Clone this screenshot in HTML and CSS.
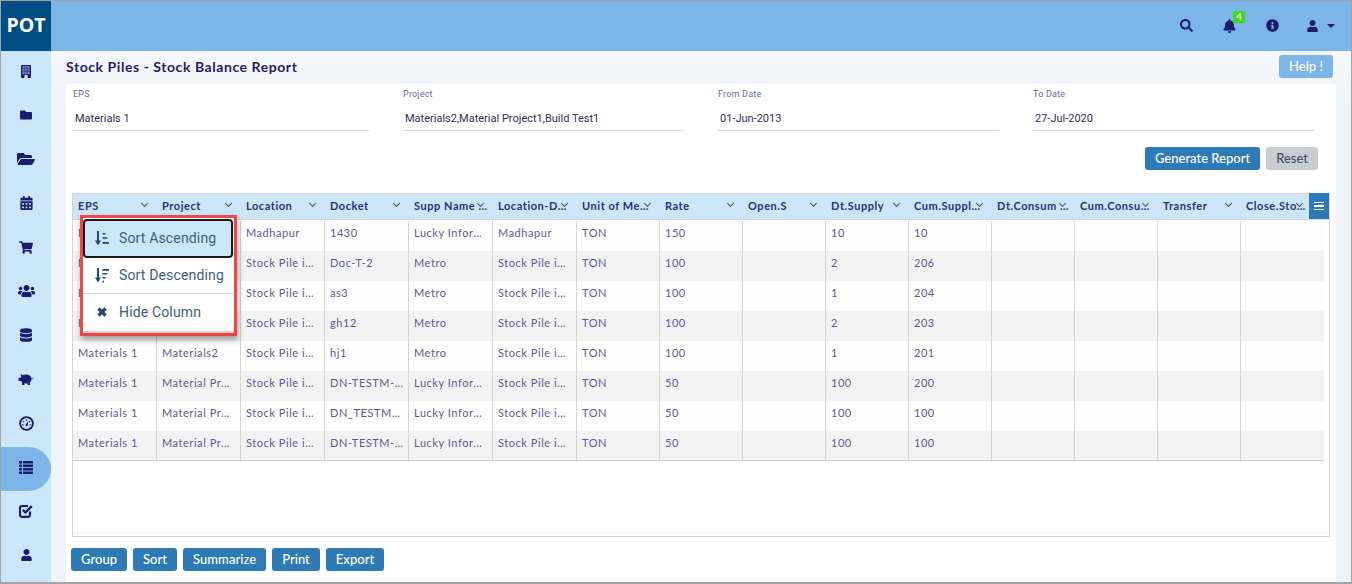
FILE: index.html
```html
<!DOCTYPE html>
<html lang="en">
<head>
<meta charset="utf-8">
<title>Stock Balance Report</title>
<link rel="stylesheet" href="styles.css">
</head>
<body>
<div class="app">
  <header class="topbar">
    <div class="logo">POT</div>
    <div class="top-icons">
      <svg class="ti search" viewBox="0 0 512 512"><path d="M505 442.7L405.3 343c-4.5-4.5-10.6-7-17-7H372c27.6-35.3 44-79.7 44-128C416 93.1 322.9 0 208 0S0 93.1 0 208s93.1 208 208 208c48.3 0 92.7-16.4 128-44v16.3c0 6.4 2.5 12.5 7 17l99.7 99.7c9.4 9.4 24.6 9.4 33.9 0l28.3-28.3c9.4-9.4 9.4-24.6.1-34zM208 336c-70.7 0-128-57.2-128-128 0-70.7 57.2-128 128-128 70.7 0 128 57.2 128 128 0 70.7-57.2 128-128 128z"/></svg>
      <div class="bell-wrap">
        <svg class="ti bell" viewBox="0 0 448 512"><path d="M224 512c35.32 0 63.97-28.65 63.97-64H160.03c0 35.35 28.65 64 63.97 64zm215.39-149.71c-19.32-20.76-55.47-51.99-55.47-154.29 0-77.7-54.48-139.9-127.94-155.16V32c0-17.67-14.32-32-31.98-32s-31.98 14.33-31.98 32v20.84C118.56 68.1 64.08 130.3 64.08 208c0 102.3-36.15 133.53-55.47 154.29-6 6.45-8.66 14.16-8.61 21.71.11 16.4 12.98 32 32.1 32h383.8c19.12 0 32-15.6 32.1-32 .05-7.55-2.61-15.27-8.61-21.71z"/></svg>
        <span class="badge">4</span>
      </div>
      <svg class="ti info" viewBox="0 0 512 512"><path d="M256 8C119.043 8 8 119.083 8 256c0 136.997 111.043 248 248 248s248-111.003 248-248C504 119.083 392.957 8 256 8zm0 110c23.196 0 42 18.804 42 42s-18.804 42-42 42-42-18.804-42-42 18.804-42 42-42zm56 254c0 6.627-5.373 12-12 12h-88c-6.627 0-12-5.373-12-12v-24c0-6.627 5.373-12 12-12h12v-64h-12c-6.627 0-12-5.373-12-12v-24c0-6.627 5.373-12 12-12h64c6.627 0 12 5.373 12 12v100h12c6.627 0 12 5.373 12 12v24z"/></svg>
      <div class="user-menu">
        <svg class="ti user" viewBox="0 0 448 512"><path d="M224 256c70.7 0 128-57.3 128-128S294.7 0 224 0 96 57.3 96 128s57.3 128 128 128zm89.6 32h-16.7c-22.2 10.2-46.9 16-72.9 16s-50.6-5.8-72.9-16h-16.7C60.2 288 0 348.2 0 422.4V464c0 26.5 21.5 48 48 48h352c26.5 0 48-21.5 48-48v-41.6c0-74.2-60.2-134.4-134.4-134.4z"/></svg>
        <span class="caret"></span>
      </div>
    </div>
  </header>
  <div class="body">
    <nav class="sidebar">
      <div class="nav-item"><svg class="ni ni-building" viewBox="0 0 10 13"><rect width="10" height="13" rx=".8" fill="#1b1b6f"/><rect x="1.300" y="1" width="7.400" height="8.200" fill="#6f7fb2"/><path d="M3.800 1v8.200M6.200 1v8.200M1.300 3.700h7.400M1.300 6.400h7.400" stroke="#2b2f7c" stroke-width=".6"/><rect x="3.500" y="10.200" width="3" height="2.800" fill="#fff"/></svg></div>
      <div class="nav-item"><svg class="ni ni-folder" viewBox="0 0 512 512"><path d="M464 128H272l-64-64H48C21.49 64 0 85.49 0 112v288c0 26.51 21.49 48 48 48h416c26.51 0 48-21.49 48-48V176c0-26.51-21.49-48-48-48z"/></svg></div>
      <div class="nav-item"><svg class="ni ni-open" viewBox="0 0 576 512"><path d="M572.694 292.093L500.27 416.248A63.997 63.997 0 0 1 444.989 448H45.025c-18.523 0-30.064-20.093-20.731-36.093l72.424-124.155A64 64 0 0 1 152 256h399.964c18.523 0 30.064 20.093 20.73 36.093zM152 224h328v-48c0-26.51-21.49-48-48-48H272l-64-64H48C21.49 64 0 85.49 0 112v278.046l69.077-118.418C86.214 242.25 117.989 224 152 224z"/></svg></div>
      <div class="nav-item"><svg class="ni ni-cal" viewBox="0 0 448 512"><path d="M0 464c0 26.5 21.5 48 48 48h352c26.5 0 48-21.5 48-48V192H0v272zm320-196c0-6.6 5.4-12 12-12h40c6.6 0 12 5.4 12 12v40c0 6.6-5.4 12-12 12h-40c-6.6 0-12-5.4-12-12v-40zm0 128c0-6.6 5.4-12 12-12h40c6.6 0 12 5.4 12 12v40c0 6.6-5.4 12-12 12h-40c-6.6 0-12-5.4-12-12v-40zM192 268c0-6.6 5.4-12 12-12h40c6.6 0 12 5.4 12 12v40c0 6.6-5.4 12-12 12h-40c-6.6 0-12-5.4-12-12v-40zm0 128c0-6.6 5.4-12 12-12h40c6.6 0 12 5.4 12 12v40c0 6.6-5.4 12-12 12h-40c-6.6 0-12-5.4-12-12v-40zM64 268c0-6.6 5.4-12 12-12h40c6.6 0 12 5.4 12 12v40c0 6.6-5.4 12-12 12H76c-6.6 0-12-5.4-12-12v-40zm0 128c0-6.6 5.4-12 12-12h40c6.6 0 12 5.4 12 12v40c0 6.6-5.4 12-12 12H76c-6.6 0-12-5.4-12-12v-40zM400 64h-48V16c0-8.8-7.2-16-16-16h-32c-8.8 0-16 7.2-16 16v48H160V16c0-8.8-7.2-16-16-16h-32c-8.8 0-16 7.2-16 16v48H48C21.5 64 0 85.5 0 112v48h448v-48c0-26.5-21.5-48-48-48z"/></svg></div>
      <div class="nav-item"><svg class="ni ni-cart" viewBox="0 0 576 512"><path d="M528.12 301.319l47.273-208C578.806 78.301 567.391 64 551.99 64H159.208l-9.166-44.81C147.758 8.021 137.93 0 126.529 0H24C10.745 0 0 10.745 0 24v16c0 13.255 10.745 24 24 24h69.883l70.248 343.435C147.325 417.1 136 435.222 136 456c0 30.928 25.072 56 56 56s56-25.072 56-56c0-15.674-6.447-29.835-16.824-40h209.647C430.447 426.165 424 440.326 424 456c0 30.928 25.072 56 56 56s56-25.072 56-56c0-22.172-12.888-41.332-31.579-50.405l5.517-24.276c3.413-15.018-8.002-29.319-23.403-29.319H218.117l-6.545-32h293.145c11.206 0 20.92-7.754 23.403-18.681z"/></svg></div>
      <div class="nav-item"><svg class="ni ni-users" viewBox="0 0 640 512"><path d="M96 224c35.3 0 64-28.7 64-64s-28.7-64-64-64-64 28.7-64 64 28.7 64 64 64zm448 0c35.3 0 64-28.7 64-64s-28.7-64-64-64-64 28.7-64 64 28.7 64 64 64zm32 32h-64c-17.6 0-33.5 7.1-45.1 18.6 40.3 22.1 68.9 62 75.1 109.4h66c17.7 0 32-14.3 32-32v-32c0-35.3-28.7-64-64-64zm-256 0c61.9 0 112-50.1 112-112S381.9 32 320 32 208 82.1 208 144s50.1 112 112 112zm76.8 32h-8.3c-20.8 10-43.9 16-68.5 16s-47.6-6-68.5-16h-8.3C179.6 288 128 339.6 128 403.2V432c0 26.5 21.5 48 48 48h288c26.5 0 48-21.5 48-48v-28.8c0-63.6-51.6-115.2-115.2-115.2zm-223.7-13.4C161.5 263.1 145.6 256 128 256H64c-35.3 0-64 28.7-64 64v32c0 17.7 14.3 32 32 32h65.9c6.3-47.4 34.9-87.3 75.2-109.4z"/></svg></div>
      <div class="nav-item"><svg class="ni ni-db" viewBox="0 0 448 512"><path d="M448 73.143v45.714C448 159.143 347.667 192 224 192S0 159.143 0 118.857V73.143C0 32.857 100.333 0 224 0s224 32.857 224 73.143zM448 176v102.857C448 319.143 347.667 352 224 352S0 319.143 0 278.857V176c48.125 33.143 136.208 48.572 224 48.572S399.874 209.143 448 176zm0 160v102.857C448 479.143 347.667 512 224 512S0 479.143 0 438.857V336c48.125 33.143 136.208 48.572 224 48.572S399.874 369.143 448 336z"/></svg></div>
      <div class="nav-item"><svg class="ni ni-piggy" viewBox="0 0 16 13"><ellipse cx="8" cy="6" rx="5.600" ry="4.500"/><path d="M2.600 1 5.500 2.200 3.600 4.600zM.6 4.800h3v3.200h-3zM4 8.500h2.400v3.500H4zM9.600 8.500H12v3.500H9.600z"/><path d="M13.400 5.600c1 .6 1.600 0 2.100-1" fill="none" stroke="#1b1b6f" stroke-width=".8"/></svg></div>
      <div class="nav-item"><svg class="ni ni-gauge" viewBox="0 0 16 16"><circle cx="8" cy="8" r="6.800" fill="none" stroke="#1b1b6f" stroke-width="2"/><path d="M8 3.400v1.600M4.200 5.600l1.300.9M11.800 5.600l-1.300.9M3.400 9.500h1.500M11.100 9.500h1.500" stroke="#1b1b6f" stroke-width="1.200"/><path d="M7 9.400 9.800 5.400 9.200 10.200a1.100 1.100 0 0 1-2.200-.8z"/></svg></div>
      <div class="nav-item active"><svg class="ni ni-list" viewBox="0 0 14 13"><path d="M0 0h3v2.500H0zM4 0h10v2.500H4zM0 3.500h3V6H0zM4 3.500h10V6H4zM0 7h3v2.500H0zM4 7h10v2.500H4zM0 10.500h3V13H0zM4 10.500h10V13H4z"/></svg></div>
      <div class="nav-item"><svg class="ni ni-check" viewBox="0 0 14 14"><path d="M11 7.600v3A2 2 0 0 1 9 12.800H3a2 2 0 0 1-2-2V4A2 2 0 0 1 3 2h6" fill="none" stroke="#1b1b6f" stroke-width="2.200"/><path d="M3.900 5.800 6.500 8.400 12.800 2.100" fill="none" stroke="#1b1b6f" stroke-width="2.400"/></svg></div>
      <div class="nav-item"><svg class="ni ni-user" viewBox="0 0 448 512"><path d="M224 256c70.700 0 128-57.300 128-128S294.700 0 224 0 96 57.300 96 128s57.300 128 128 128zm89.600 32h-16.700c-22.200 10.200-46.900 16-72.900 16s-50.600-5.800-72.900-16h-16.700C60.200 288 0 348.200 0 422.400V464c0 26.500 21.500 48 48 48h352c26.500 0 48-21.500 48-48v-41.600c0-74.200-60.200-134.400-134.400-134.400z"/></svg></div>
    </nav>
    <main class="content">
      <div class="title-row">
        <h1 class="page-title">Stock Piles - Stock Balance Report</h1>
        <button class="help-btn">Help !</button>
      </div>
      <section class="card">
        <div class="fields">
          <div class="field field-wide"><label class="field-label">EPS</label><div class="field-value">Materials 1</div></div>
          <div class="field"><label class="field-label">Project</label><div class="field-value">Materials2,Material Project1,Build Test1</div></div>
          <div class="field"><label class="field-label">From Date</label><div class="field-value">01-Jun-2013</div></div>
          <div class="field"><label class="field-label">To Date</label><div class="field-value">27-Jul-2020</div></div>
        </div>
        <div class="actions">
          <button class="btn btn-primary">Generate Report</button>
          <button class="btn btn-muted">Reset</button>
        </div>
        <div class="grid">
          <div class="grid-head">
            <div class="hc"><span class="hc-text">EPS</span></div>
            <div class="hc"><span class="hc-text">Project</span></div>
            <div class="hc"><span class="hc-text">Location</span></div>
            <div class="hc"><span class="hc-text">Docket</span></div>
            <div class="hc"><span class="hc-text">Supp Name Details</span></div>
            <div class="hc"><span class="hc-text">Location-Date</span></div>
            <div class="hc"><span class="hc-text">Unit of Measure</span></div>
            <div class="hc"><span class="hc-text">Rate</span></div>
            <div class="hc"><span class="hc-text">Open.S</span></div>
            <div class="hc"><span class="hc-text">Dt.Supply</span></div>
            <div class="hc"><span class="hc-text">Cum.Supply Qty</span></div>
            <div class="hc"><span class="hc-text">Dt.Consum Qty</span></div>
            <div class="hc"><span class="hc-text">Cum.Consump</span></div>
            <div class="hc"><span class="hc-text">Transfer</span></div>
            <div class="hc hc-last"><span class="hc-text">Close.Stock Qty</span></div>
          </div>
          <button class="columns-btn" aria-label="Columns"><span></span><span></span><span></span></button>
          <div class="grid-body">
            <div class="row"><div class="c">Materials 1</div><div class="c">Materials2</div><div class="c">Madhapur</div><div class="c c-code">1430</div><div class="c">Lucky Information</div><div class="c">Madhapur</div><div class="c">TON</div><div class="c">150</div><div class="c"></div><div class="c">10</div><div class="c">10</div><div class="c"></div><div class="c"></div><div class="c"></div><div class="c"></div></div>
            <div class="row"><div class="c">Materials 1</div><div class="c">Materials2</div><div class="c">Stock Pile in Site</div><div class="c c-code">Doc-T-2</div><div class="c">Metro</div><div class="c">Stock Pile in Site</div><div class="c">TON</div><div class="c">100</div><div class="c"></div><div class="c">2</div><div class="c">206</div><div class="c"></div><div class="c"></div><div class="c"></div><div class="c"></div></div>
            <div class="row"><div class="c">Materials 1</div><div class="c">Materials2</div><div class="c">Stock Pile in Site</div><div class="c c-code">as3</div><div class="c">Metro</div><div class="c">Stock Pile in Site</div><div class="c">TON</div><div class="c">100</div><div class="c"></div><div class="c">1</div><div class="c">204</div><div class="c"></div><div class="c"></div><div class="c"></div><div class="c"></div></div>
            <div class="row"><div class="c">Materials 1</div><div class="c">Materials2</div><div class="c">Stock Pile in Site</div><div class="c c-code">gh12</div><div class="c">Metro</div><div class="c">Stock Pile in Site</div><div class="c">TON</div><div class="c">100</div><div class="c"></div><div class="c">2</div><div class="c">203</div><div class="c"></div><div class="c"></div><div class="c"></div><div class="c"></div></div>
            <div class="row"><div class="c">Materials 1</div><div class="c">Materials2</div><div class="c">Stock Pile in Site</div><div class="c c-code">hj1</div><div class="c">Metro</div><div class="c">Stock Pile in Site</div><div class="c">TON</div><div class="c">100</div><div class="c"></div><div class="c">1</div><div class="c">201</div><div class="c"></div><div class="c"></div><div class="c"></div><div class="c"></div></div>
            <div class="row"><div class="c">Materials 1</div><div class="c">Material Project1</div><div class="c">Stock Pile in Site</div><div class="c c-code">DN-TESTM-0012</div><div class="c">Lucky Information</div><div class="c">Stock Pile in Site</div><div class="c">TON</div><div class="c">50</div><div class="c"></div><div class="c">100</div><div class="c">200</div><div class="c"></div><div class="c"></div><div class="c"></div><div class="c"></div></div>
            <div class="row"><div class="c">Materials 1</div><div class="c">Material Project1</div><div class="c">Stock Pile in Site</div><div class="c c-code">DN_TESTM_0013</div><div class="c">Lucky Information</div><div class="c">Stock Pile in Site</div><div class="c">TON</div><div class="c">50</div><div class="c"></div><div class="c">100</div><div class="c">100</div><div class="c"></div><div class="c"></div><div class="c"></div><div class="c"></div></div>
            <div class="row"><div class="c">Materials 1</div><div class="c">Material Project1</div><div class="c">Stock Pile in Site</div><div class="c c-code">DN-TESTM-0014</div><div class="c">Lucky Information</div><div class="c">Stock Pile in Site</div><div class="c">TON</div><div class="c">50</div><div class="c"></div><div class="c">100</div><div class="c">100</div><div class="c"></div><div class="c"></div><div class="c"></div><div class="c"></div></div>
          </div>
          <div class="scroll-line"></div>
          <div class="col-menu">
            <div class="menu-item focused">
              <svg class="mi" viewBox="0 0 14 15"><path d="M3 0v11" stroke="#1d4a73" stroke-width="2"/><path d="M0 9.500h6L3 14.500z" fill="#1d4a73"/><path d="M7.500 2h3v1.600h-3zM7.500 6.200h4.800v1.600H7.500zM7.500 11h6.500v1.800H7.500z" fill="#1d4a73"/></svg>
              <span>Sort Ascending</span>
            </div>
            <div class="menu-item">
              <svg class="mi" viewBox="0 0 14 15"><path d="M3 0v11" stroke="#1d4a73" stroke-width="2"/><path d="M0 9.500h6L3 14.500z" fill="#1d4a73"/><path d="M7.500 1h6.500v1.800H7.500zM7.500 5h4.800v1.600H7.500zM7.500 9h3v1.600h-3zM7.500 12.800h1.500v1.600H7.500z" fill="#1d4a73"/></svg>
              <span>Sort Descending</span>
            </div>
            <div class="menu-item divided">
              <svg class="mi mi-x" viewBox="1 1 10 10"><path d="M2.500 2.500l7 7M9.500 2.500l-7 7" stroke="#1d4a73" stroke-width="3.200"/></svg>
              <span>Hide Column</span>
            </div>
          </div>
        </div>
        <div class="footer-btns">
          <button class="btn btn-primary">Group</button>
          <button class="btn btn-primary">Sort</button>
          <button class="btn btn-primary">Summarize</button>
          <button class="btn btn-primary">Print</button>
          <button class="btn btn-primary">Export</button>
        </div>
      </section>
    </main>
  </div>
</div>
</body>
</html>
```
FILE: styles.css
```css
* { box-sizing: border-box; }
html, body { margin: 0; padding: 0; height: 100%; overflow: hidden; }
body { font-family: "Lato", "Liberation Sans", sans-serif; background: #fff; }
.app { width: 1352px; height: 584px; border: 1px solid #a3a3a3; border-bottom-width: 2px; display: flex; flex-direction: column; overflow: hidden; }

.topbar { height: 50px; flex: none; background: #7cb6e8; display: flex; justify-content: space-between; }
.logo { width: 50px; background: #004c85; color: #fff; font: 700 19.5px/48px "Open Sans", sans-serif; text-align: center; }
.top-icons { display: flex; align-items: center; padding: 0 16px 1px 0; }
.ti { fill: #1b1b6f; display: block; }
.search { width: 13px; height: 13px; margin-right: 30px; }
.bell-wrap { position: relative; margin-right: 30px; }
.bell { width: 13px; height: 14px; }
.badge { position: absolute; left: 10px; top: -8px; width: 12px; height: 12px; border-radius: 2px; background: #3ddb14; color: #fff; font: 700 9px/11px "Lato", sans-serif; text-align: center; }
.info { width: 13px; height: 13px; margin-right: 28px; }
.user-menu { display: flex; align-items: center; gap: 9px; }
.user { width: 11px; height: 12px; }
.caret { width: 0; height: 0; border: 4px solid transparent; border-top: 4px solid #1b1b6f; border-bottom: 0; }

.body { flex: 1; display: flex; min-height: 0; }
.sidebar { width: 50px; flex: none; background: #cce6f9; display: flex; flex-direction: column; }
.nav-item { height: 44px; flex: none; padding-bottom: 4px; display: flex; align-items: center; justify-content: center; }
.nav-item.active { background: #7cb6e8; border-radius: 0 22px 22px 0; }
.ni { fill: #1b1b6f; display: block; }
.ni-building { width: 10px; height: 13px; }
.ni-folder { width: 12px; height: 12px; }
.ni-open { width: 18px; height: 16px; }
.ni-cal { width: 13px; height: 14px; }
.ni-cart { width: 14px; height: 13px; }
.ni-users { width: 17px; height: 14px; }
.ni-db { width: 12px; height: 14px; }
.ni-piggy { width: 16px; height: 13px; }
.ni-gauge { width: 15px; height: 15px; }
.ni-list { width: 14px; height: 13px; }
.ni-check { width: 14px; height: 14px; }
.ni-user { width: 11px; height: 12px; }

.content { flex: 1; min-width: 0; background: linear-gradient(#f4f8fb, #eef3f7 60px); padding: 4px 15px 0; display: flex; flex-direction: column; }
.title-row { height: 29px; flex: none; display: flex; justify-content: space-between; align-items: flex-start; }
.page-title { margin: 3px 0 0; font: 700 14px/17px "Lato", sans-serif; letter-spacing: .56px; color: #1d1d6b; }
.help-btn { width: 54px; height: 23px; margin-right: 3px; border: 0; border-radius: 3px; background: #7cb6e8; color: #fff; font: 500 13px/23px "Lato", sans-serif; padding: 0; }

.card { flex: 1; min-height: 0; background: #fff; border-radius: 4px 4px 0 0; padding: 5px 6px 0 6px; display: flex; flex-direction: column; }
.fields { display: flex; gap: 34px; padding: 0 22px 0 1px; height: 42px; flex: none; }
.field { flex: 0 0 281px; border-bottom: 1px solid #dcdcdc; }
.field-wide { flex-basis: 296px; }
.field-label { display: block; font: 400 9px/11px "Roboto", sans-serif; letter-spacing: .2px; color: #6a6aa8; }
.field-value { margin-top: 12px; padding-left: 2px; font: 400 11px/14px "Roboto", sans-serif; color: #2e3060; }

.actions { height: 23px; margin-top: 16px; flex: none; display: flex; justify-content: flex-end; gap: 6px; padding-right: 12px; }
.btn { height: 23px; padding: 0 10px; border: 0; border-radius: 3px; font: 500 13px/23px "Lato", sans-serif; color: #fff; }
.btn-primary { background: #2e7ab6; }
.btn-muted { background: #c9ccd1; color: #44506a; }

.grid { position: relative; height: 344px; margin-top: 23px; border: 1px solid #d4d4d4; flex: none; }
.grid-head { height: 26px; background: #cce6f9; border-bottom: 1px solid #d4d4d4; display: grid; grid-template-columns: repeat(6, 84px) repeat(9, 83px); }
.hc { position: relative; border-right: 1px solid #dde3e8; padding: 0 5px; font: 700 11px/24px "Lato", sans-serif; letter-spacing: .55px; color: #2d2d7a; }
.hc-text { display: block; overflow: hidden; white-space: nowrap; text-overflow: ellipsis; }
.hc::after { content: ""; position: absolute; right: 9px; top: 7px; width: 4px; height: 4px; border-right: 1px solid #4a4a8c; border-bottom: 1px solid #4a4a8c; transform: rotate(45deg); }
.hc-last { padding-right: 15px; border-right: 0; }
.hc-last::after { right: 22px; }
.columns-btn { position: absolute; right: 0; top: -1px; width: 20px; height: 26px; background: #2e7ab6; border: 0; padding: 0; display: flex; flex-direction: column; justify-content: center; align-items: center; gap: 2px; }
.columns-btn span { width: 10px; height: 1.5px; background: #fff; }

.grid-body { width: 1251px; padding-top: 1px; border-bottom: 1px solid #d4d4d4; }
.row { height: 30px; display: grid; grid-template-columns: repeat(6, 84px) repeat(9, 83px); background: #fdfdfd; }
.row:nth-child(even) { background: #f2f2f2; }
.row:last-child { height: 29px; }
.c { border-right: 1px solid #d4d4d4; padding: 0 5px; font: 400 11px/24px "Lato", sans-serif; letter-spacing: .55px; color: #5a5a9a; overflow: hidden; white-space: nowrap; text-overflow: ellipsis; }
.c-code { padding-right: 3px; }
.row .c:last-child { border-right: 0; }
.scroll-line { position: absolute; left: 0; right: 0; bottom: 3px; height: 1px; background: #f0f0f0; }

.col-menu { position: absolute; left: 7px; top: 21px; width: 157px; height: 121px; border: 3px solid #f24545; background: #fff; padding: 1px 1px 0 0; box-shadow: inset 0 -2px 0 #d0d0d0, 1px 4px 6px rgba(0,0,0,.35); }
.menu-item { height: 35px; display: flex; align-items: center; padding: 0 0 1px 12px; gap: 10px; font: 400 14px/20px "Roboto", sans-serif; letter-spacing: .15px; color: #3d5d7d; }
.menu-item.focused { height: 39px; background: #cce6f9; border: 2px solid #1a1a1a; border-radius: 4px; padding-left: 10px; }
.menu-item.divided { height: 37px; padding-bottom: 0; border-top: 1px solid #d4d4d4; }
.mi { width: 14px; height: 15px; flex: none; display: block; }
.mi-x { width: 10px; height: 10px; margin: 0 2px; }

.footer-btns { display: flex; gap: 6px; margin: 11px 0 0 -1px; }
.footer-btns .btn { letter-spacing: .03px; }
```
